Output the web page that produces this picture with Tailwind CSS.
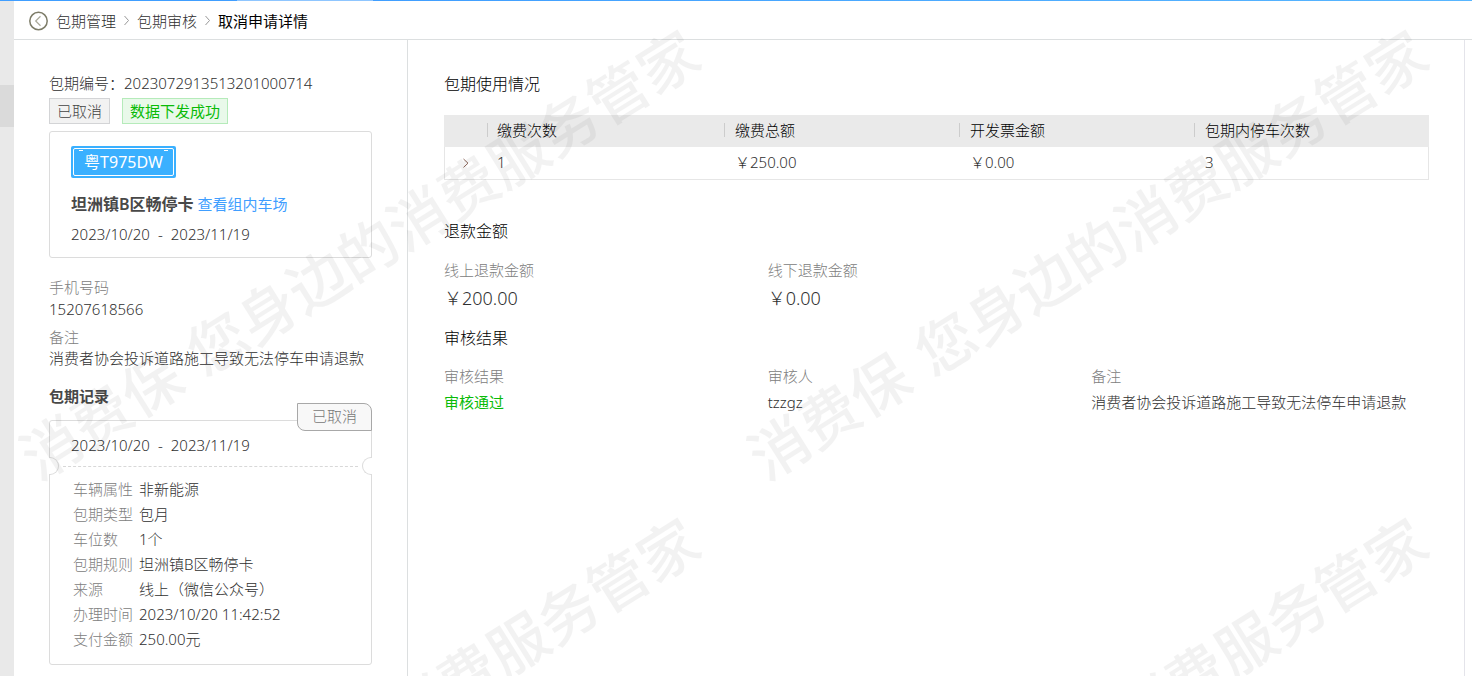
<!DOCTYPE html>
<html lang="zh-CN">
<head>
    <meta charset="UTF-8">
    <meta name="viewport" content="width=device-width, initial-scale=1.0">
    <title>取消申请详情</title>
    <script src="https://cdn.jsdelivr.net/npm/@tailwindcss/browser@4"></script>
</head>
<body class="relative flex h-screen overflow-hidden bg-white font-['Noto_Sans','Noto_Sans_CJK_SC',sans-serif] text-[15px] leading-5 font-light text-[#303030]">

    <!-- Collapsed side menu -->
    <aside class="w-3.5 shrink-0 bg-[#e9e9e9] pt-[85px]">
        <div class="h-[42px] bg-[#dadada]"></div>
    </aside>

    <div class="flex min-w-0 flex-1 flex-col">
        <!-- Breadcrumb -->
        <header class="flex h-10 shrink-0 items-center border-b border-[#dcdfe0] pt-0.5 pl-3.5">
            <button type="button" aria-label="返回" class="mr-2 cursor-pointer">
                <svg class="size-5" viewBox="0 0 20 20" fill="none">
                    <circle cx="10.5" cy="10" r="8.7" stroke="#7d7c68" stroke-width="1.5"/>
                    <path d="M12.5 5.3L7.7 10L12.5 14.7" stroke="#aaa99a" stroke-width="1.2"/>
                </svg>
            </button>
            <nav class="flex items-center">
                <a href="#">包期管理</a>
                <svg class="mx-1.5 h-3 w-2" viewBox="0 0 8 12" fill="none"><path d="M2.5 1L6.5 5.5L2.5 10" stroke="#999"/></svg>
                <a href="#" class="ml-px">包期审核</a>
                <svg class="mx-1.5 h-3 w-2" viewBox="0 0 8 12" fill="none"><path d="M2.5 1L6.5 5.5L2.5 10" stroke="#999"/></svg>
                <span class="ml-px font-normal text-black">取消申请详情</span>
            </nav>
        </header>

        <div class="flex min-h-0 flex-1">
            <!-- Left: order info -->
            <section class="w-[394px] shrink-0 border-r border-[#dcdfe0] px-[35px] pt-[31px]">
                <p class="leading-6">包期编号：2023072913513201000714</p>
                <div class="mt-[3px] flex gap-3">
                    <span class="border border-[#d3d4d6] bg-[#f2f2f2] px-[7px] leading-6 text-[#444]">已取消</span>
                    <span class="border border-[#b5ebba] bg-[#e9f9ea] px-[7px] leading-6 font-normal text-[#09bb07]">数据下发成功</span>
                </div>

                <div class="mt-[7px] rounded-[3px] border border-[#dcdcdc] px-[21px] pt-3.5 pb-[11px]">
                    <div class="relative w-[105px] rounded-xs bg-[#3ab0ff] p-0.5">
                        <div class="rounded-xs border border-white text-center text-base leading-[26px] font-normal text-white">粤T975DW</div>
                        <i class="absolute top-1 left-2 h-px w-1 bg-white"></i>
                        <i class="absolute top-1 right-2 h-px w-1 bg-white"></i>
                    </div>
                    <p class="mt-3.5 leading-6"><b class="text-base leading-6 font-semibold text-[#484848]">坦洲镇B区畅停卡</b> <a href="#" class="font-normal text-[#409eff]">查看组内车场</a></p>
                    <p class="mt-1.5 flex gap-2 leading-6"><span>2023/10/20</span><span>-</span><span>2023/11/19</span></p>
                </div>

                <dl class="mt-[19px]">
                    <dt class="text-[#808080]">手机号码</dt>
                    <dd class="mt-0.5">15207618566</dd>
                    <dt class="mt-2 text-[#808080]">备注</dt>
                    <dd class="mt-px">消费者协会投诉道路施工导致无法停车申请退款</dd>
                </dl>

                <h2 class="mt-[18px] font-semibold text-[#484848]">包期记录</h2>
                <div class="relative mt-3.5 rounded-[3px] border border-[#dcdcdc]">
                    <span class="absolute -top-[18px] -right-px rounded-tr-lg rounded-bl-lg border border-[#a8a8a8] bg-[#f8f8f8] px-3.5 pb-0.5 leading-6 text-[#777]">已取消</span>
                    <p class="flex gap-2 px-[21px] pt-3 leading-6"><span>2023/10/20</span><span>-</span><span>2023/11/19</span></p>
                    <!-- Ticket tear line -->
                    <div class="-mx-px flex h-[18px] items-center justify-between">
                        <i class="h-[18px] w-2.5 rounded-r-full border border-l-0 border-[#dcdcdc] bg-white"></i>
                        <i class="mx-1 flex-1 border-t border-dashed border-[#d8d8d8]"></i>
                        <i class="h-[18px] w-2.5 rounded-l-full border border-r-0 border-[#dcdcdc] bg-white"></i>
                    </div>
                    <dl class="grid grid-cols-[66px_1fr] px-[23px] pt-0.5 pb-3 leading-[25px]">
                        <dt class="text-[#808080]">车辆属性</dt><dd>非新能源</dd>
                        <dt class="text-[#808080]">包期类型</dt><dd>包月</dd>
                        <dt class="text-[#808080]">车位数</dt><dd>1个</dd>
                        <dt class="text-[#808080]">包期规则</dt><dd>坦洲镇B区畅停卡</dd>
                        <dt class="text-[#808080]">来源</dt><dd>线上（微信公众号）</dd>
                        <dt class="text-[#808080]">办理时间</dt><dd>2023/10/20 11:42:52</dd>
                        <dt class="text-[#808080]">支付金额</dt><dd>250.00元</dd>
                    </dl>
                </div>
            </section>

            <!-- Right: usage, refund and audit -->
            <main class="mr-[7px] min-w-0 flex-1 border-r border-[#e4e4ea] pt-8 pr-[35px] pl-9">
                <h2 class="text-base leading-6 text-black">包期使用情况</h2>
                <table class="mt-[19px] w-full table-fixed border-separate border-spacing-0 border-b border-[#e6e6e6] text-left">
                    <thead class="bg-[#eaeaea] text-black">
                        <tr class="h-8">
                            <th class="w-[43px]" aria-label="展开"></th>
                            <th class="w-[237px] pb-0.5 font-light"><div class="flex items-center gap-[9px]"><i class="h-3.5 w-px bg-[#ccc]"></i>缴费次数</div></th>
                            <th class="pb-0.5 font-light"><div class="flex items-center gap-2.5"><i class="h-3.5 w-px bg-[#ccc]"></i>缴费总额</div></th>
                            <th class="pb-0.5 font-light"><div class="flex items-center gap-2.5"><i class="h-3.5 w-px bg-[#ccc]"></i>开发票金额</div></th>
                            <th class="pb-0.5 font-light"><div class="flex items-center gap-2.5"><i class="h-3.5 w-px bg-[#ccc]"></i>包期内停车次数</div></th>
                        </tr>
                    </thead>
                    <tbody>
                        <tr class="h-8">
                            <td class="border-l border-[#e6e6e6]">
                                <button type="button" aria-label="展开" class="flex w-full cursor-pointer justify-center">
                                    <svg class="h-3 w-2" viewBox="0 0 8 12" fill="none"><path d="M1.5 2L6 6.2L1.5 10.4" stroke="#8a6458"/></svg>
                                </button>
                            </td>
                            <td class="pb-0.5 pl-2.5">1</td>
                            <td class="pb-0.5 pl-[11px]">￥250.00</td>
                            <td class="pb-0.5 pl-[11px]">￥0.00</td>
                            <td class="border-r border-[#e6e6e6] pb-0.5 pl-[11px]">3</td>
                        </tr>
                    </tbody>
                </table>

                <h2 class="mt-[39px] text-base leading-6 text-black">退款金额</h2>
                <dl class="mt-[17px] mr-3.5 grid grid-cols-3">
                    <div>
                        <dt class="text-[#808080]">线上退款金额</dt>
                        <dd class="mt-1.5 text-lg leading-6">￥200.00</dd>
                    </div>
                    <div>
                        <dt class="text-[#808080]">线下退款金额</dt>
                        <dd class="mt-1.5 text-lg leading-6">￥0.00</dd>
                    </div>
                </dl>

                <h2 class="mt-4 text-base leading-6 text-black">审核结果</h2>
                <dl class="mt-4 mr-3.5 grid grid-cols-3">
                    <div>
                        <dt class="text-[#808080]">审核结果</dt>
                        <dd class="mt-1.5 font-normal text-[#09bb07]">审核通过</dd>
                    </div>
                    <div>
                        <dt class="text-[#808080]">审核人</dt>
                        <dd class="mt-1.5">tzzgz</dd>
                    </div>
                    <div>
                        <dt class="text-[#808080]">备注</dt>
                        <dd class="mt-1.5 whitespace-nowrap">消费者协会投诉道路施工导致无法停车申请退款</dd>
                    </div>
                </dl>
            </main>
        </div>
    </div>

    <!-- Top edge -->
    <div class="absolute inset-x-0 top-0 flex h-px">
        <i class="w-[237px] bg-[#409eff]"></i>
        <i class="w-[136px] bg-[#8fc6ff]"></i>
        <i class="flex-1 bg-linear-to-r from-[#409eff] to-[#58b6ff]"></i>
    </div>

    <!-- Watermark -->
    <svg class="pointer-events-none absolute inset-0 size-full" aria-hidden="true">
        <defs>
            <pattern id="watermark" x="0" y="10" width="728" height="488" patternUnits="userSpaceOnUse">
                <text transform="translate(38 472) rotate(-32)" class="fill-black/5 text-[59px] font-medium">消费保 <tspan dx="4">您身边的消费服务管家</tspan></text>
            </pattern>
        </defs>
        <rect width="100%" height="100%" fill="url(#watermark)"/>
    </svg>
</body>
</html>
